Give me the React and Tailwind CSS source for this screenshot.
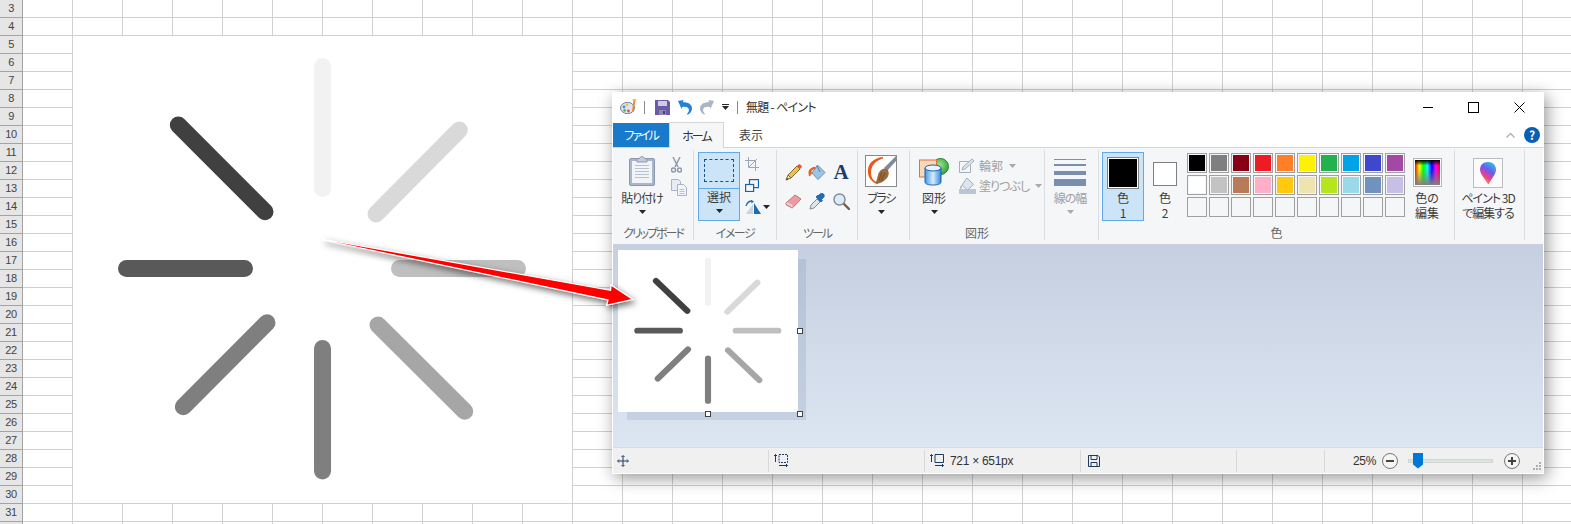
const rowNumbers = Array.from({ length: 30 }, (_, i) => i + 3);
const columns = Array.from({ length: 31 }, (_, i) => i);

const paletteTop = ["#000000", "#7f7f7f", "#880015", "#ed1c24", "#ff7f27", "#fff200", "#22b14c", "#00a2e8", "#3f48cc", "#a349a4"];
const paletteMiddle = ["#ffffff", "#c3c3c3", "#b97a57", "#ffaec9", "#ffc90e", "#efe4b0", "#b5e61d", "#99d9ea", "#7092be", "#c8bfe7"];

const spokes = [
  { x1: 322.5, y1: 66.5, x2: 322.5, y2: 188.5, color: "#f2f2f2" },
  { x1: 459.3, y1: 130, x2: 376, y2: 214, color: "#d9d9d9" },
  { x1: 399.5, y1: 268.5, x2: 517.5, y2: 268.5, color: "#bfbfbf" },
  { x1: 378, y1: 325, x2: 464.7, y2: 411.3, color: "#a6a6a6" },
  { x1: 322.5, y1: 348.5, x2: 322.5, y2: 471, color: "#7f7f7f" },
  { x1: 267, y1: 322.7, x2: 183.3, y2: 406.7, color: "#7f7f7f" },
  { x1: 126.5, y1: 268.5, x2: 244.5, y2: 268.5, color: "#595959" },
  { x1: 178.3, y1: 125, x2: 265, y2: 211.7, color: "#404040" },
];

function Spinner() {
  return (
    <svg viewBox="73 36 499 467" preserveAspectRatio="none" className="block w-full h-full">
      {spokes.map((s) => (
        <line key={s.x1 + "-" + s.y1} x1={s.x1} y1={s.y1} x2={s.x2} y2={s.y2} stroke={s.color} strokeWidth="17" strokeLinecap="round" />
      ))}
    </svg>
  );
}

function Sheet() {
  return (
    <div className="flex flex-col">
      {rowNumbers.map((n) => (
        <div key={n} className="flex h-[18px] shrink-0">
          <div className="flex items-center justify-center w-[23px] shrink-0 bg-[#e6e6e6] border-r border-b border-r-[#a3a3a3] border-b-[#a3a3a3] text-[11px] tracking-[-0.4px] text-[#444444] [font-family:'Liberation_Sans',sans-serif]">
            {n < 32 ? n : ""}
          </div>
          {columns.map((c) => (
            <div key={c} className="w-[50px] shrink-0 border-r border-b border-[#d0d0d0]" />
          ))}
        </div>
      ))}
    </div>
  );
}

function Caret({ muted, className = "" }) {
  return (
    <svg width="7" height="4" viewBox="0 0 7 4" className={className}>
      <path d="M0 0h7L3.5 4z" fill={muted ? "#a9a9a9" : "#262626"} />
    </svg>
  );
}

function BigButton({ width, label, lines, icon, caret = true, muted, selected, textClass = "" }) {
  const color = muted ? "text-[#a0a0a0]" : "text-[#3c3c3c]";
  return (
    <div
      className={
        "flex flex-col items-center shrink-0 h-[69px] " +
        (selected ? "bg-[#cce4f7] border border-[#64a8ec]" : "")
      }
      style={{ width }}
    >
      <div className={"flex items-center justify-center w-full shrink-0 " + (selected ? "h-[37px]" : "h-[38px]")}>{icon}</div>
      {lines ? (
        <div className={"text-center leading-[15px] whitespace-nowrap " + color + " " + textClass}>
          {lines.map((l) => (
            <div key={l}>{l}</div>
          ))}
        </div>
      ) : (
        <div className={"leading-[15px] whitespace-nowrap " + color + " " + textClass}>{label}</div>
      )}
      {caret && <Caret muted={muted} className="mt-[5px]" />}
    </div>
  );
}

function Group({ width, label, labelClass = "", children }) {
  return (
    <div className="flex flex-col shrink-0 h-[90px] border-r border-[#dcdde0]" style={{ width }}>
      <div className="flex flex-1 pt-[2px]">{children}</div>
      <div className={"text-center leading-[15px] h-[15px] text-[#666666] " + labelClass}>{label}</div>
    </div>
  );
}

function PaintIcon() {
  return (
    <svg width="18" height="16" viewBox="0 0 18 16">
      <ellipse cx="7.5" cy="9" rx="7" ry="5.6" fill="#dfe6ee" stroke="#6d8199" />
      <circle cx="4" cy="8" r="1.4" fill="#3f8fd6" />
      <circle cx="7" cy="6" r="1.4" fill="#e9c33b" />
      <circle cx="4.6" cy="11.4" r="1.4" fill="#5db14e" />
      <circle cx="8.4" cy="12" r="1.4" fill="#d9534f" />
      <path d="M13.4 1.5l2 .5-1.8 11-1.6-.4z" fill="#f0872e" />
      <path d="M12.6 0h3.6v2h-3.6z" fill="#f3b36a" />
    </svg>
  );
}

function SaveIcon({ color = "#6b5ba6" }) {
  return (
    <svg width="15" height="15" viewBox="0 0 15 15">
      <path d="M0 0h13l2 2v13H0z" fill={color} />
      <path d="M3 1h9v5H3z" fill="#cfc9e6" />
      <path d="M4 10h7v5H4z" fill="#8f86b8" />
      <path d="M8 11h2v3H8z" fill="#4a3e7e" />
    </svg>
  );
}

function UndoIcon({ color, flip }) {
  return (
    <svg width="15" height="15" viewBox="0 0 15 15" className={flip ? "-scale-x-100" : ""}>
      <path d="M0 1l5.5-1-.6 2.2C9.5 2 14 4 14 8.5c0 2.500-1.600 4.800-4 6-.6.300-1.400-.2-.8-.8 1.400-1.400 2-2.800 1.600-4.400-.5-2-2.800-2.700-6.600-2.400L3.600 9z" fill={color} />
    </svg>
  );
}

function ClipboardIcon() {
  return (
    <svg width="26" height="30" viewBox="0 0 26 30">
      <rect x="0.500" y="2.500" width="25" height="27" rx="1.500" fill="#a9b6cb" stroke="#8b98ae" />
      <rect x="3" y="5" width="20" height="22" fill="#f2f4f7" />
      <path d="M6 9.500h14M6 12.500h14M6 15.500h14M6 18.500h14M6 21.500h14" stroke="#b8c1cf" />
      <path d="M8 4c0-1 1-1.500 2.500-1.500C11 1 12 .5 13 .5s2 .5 2.500 2c1.500 0 2.500.5 2.500 1.500v2H8z" fill="#c4ccd9" stroke="#8b98ae" />
    </svg>
  );
}

function ScissorsIcon() {
  return (
    <svg width="11" height="16" viewBox="0 0 11 16" fill="none" stroke="#8b9ab2" strokeWidth="1.500">
      <path d="M2 0l5 10M9 0L4 10" />
      <circle cx="2.500" cy="13" r="2" />
      <circle cx="8.500" cy="13" r="2" />
    </svg>
  );
}

function CopyIcon() {
  return (
    <svg width="16" height="17" viewBox="0 0 16 17">
      <path d="M.5.500h7l2 2v9h-9z" fill="#e8ecf2" stroke="#a7b3c6" />
      <path d="M6.500 5.500h6l3 3v8h-9z" fill="#f3f5f8" stroke="#a7b3c6" />
      <path d="M8.500 10.500h5M8.500 12.500h5M8.500 14.500h5" stroke="#b9c3d2" />
    </svg>
  );
}

function CropIcon() {
  return (
    <svg width="14" height="14" viewBox="0 0 14 14" fill="none" stroke="#9aa6b8">
      <path d="M3.500 0v10.500H14M0 3.500h10.500V14M4 10l8-8" />
    </svg>
  );
}

function ResizeIcon() {
  return (
    <svg width="14" height="13" viewBox="0 0 14 13" fill="none" stroke="#1764ad" strokeWidth="1.200">
      <rect x="4.500" y="0.600" width="9" height="8" fill="#f5f6f7" />
      <rect x="0.600" y="5.500" width="8" height="7" fill="#f5f6f7" />
    </svg>
  );
}

function RotateIcon() {
  return (
    <svg width="16" height="14" viewBox="0 0 16 14">
      <path d="M1 14l7-10v10z" fill="#cfd3d8" />
      <path d="M9 14V3l7 11z" fill="#1c6cb5" />
      <path d="M1 6c1-3 3-5 6-5" fill="none" stroke="#1c6cb5" strokeWidth="1.300" />
      <path d="M6 0l3 1.200L6.500 3.500z" fill="#1c6cb5" />
    </svg>
  );
}

function PencilIcon() {
  return (
    <svg width="17" height="17" viewBox="0 0 17 17">
      <path d="M3 11L12 2l3 3-9 9z" fill="#f0c14a" stroke="#7a6a3a" />
      <path d="M12 2l1.500-1.500c.5-.5 1.200-.5 1.700 0l1.300 1.300c.5.500.5 1.200 0 1.700L15 5z" fill="#e2574c" />
      <path d="M3 11l3 3-5 2z" fill="#f3dfb5" stroke="#7a6a3a" />
      <path d="M1 16l1.500-2 1 1z" fill="#333333" />
    </svg>
  );
}

function BucketIcon() {
  return (
    <svg width="18" height="17" viewBox="0 0 18 17">
      <path d="M9.500 1L17 8.500 10 15.500 4 9z" fill="#9ac4e8" stroke="#6f8fae" />
      <path d="M9 2l3 6" stroke="#5e7d9c" />
      <path d="M5 9C3.500 9 2.500 8 4 6.500 5 5.500 6.500 4.800 8 4.500L6.800 2.800C3 3.500 .5 5.800.5 8.500c0 1 .3 1.800.3 3 0 1 1.700 1 1.700 0 0-.8.300-1.300 1-1.500z" fill="#ea5f1a" />
    </svg>
  );
}

function EraserIcon() {
  return (
    <svg width="17" height="15" viewBox="0 0 17 15">
      <path d="M1 9l9-8 6 4-8 8.500c-.5.500-1 .5-1.500.2L1.500 11C.8 10.600.6 9.600 1 9z" fill="#ef9aa0" stroke="#c1767c" />
      <path d="M1.500 10l6 3.500 0-2.500L2 8z" fill="#d9d9d9" />
    </svg>
  );
}

function DropperIcon() {
  return (
    <svg width="17" height="17" viewBox="0 0 17 17">
      <path d="M2 12l6-6 3 3-6 6-4 1z" fill="#dfe5ec" stroke="#7f8b98" />
      <path d="M9 3l2-2c1-1 2.500-1 3.500 0s1 2.500 0 3.500l-2 2 1 1-1.500 1.500-5-5L9 2z" fill="#1c6fc0" stroke="#124f8c" strokeWidth="0.700" />
    </svg>
  );
}

function MagnifierIcon() {
  return (
    <svg width="17" height="17" viewBox="0 0 17 17">
      <path d="M10 10l6 6" stroke="#7a5a3a" strokeWidth="2.400" strokeLinecap="round" />
      <circle cx="6.500" cy="6.500" r="5.500" fill="#dcebf7" stroke="#7f8b98" strokeWidth="1.400" />
    </svg>
  );
}

function BrushIcon() {
  return (
    <svg width="32" height="32" viewBox="0 0 32 32">
      <rect x="0.500" y="0.500" width="31" height="31" fill="#ffffff" stroke="#8a8a8a" />
      <path d="M31 1L19 13l3 3L31 6z" fill="#7f8a99" />
      <path d="M18 2C8 3 2 9 3 18c.5 5 4 9 9 11 2 .5 1-1 0-1.500-4-2-6-5-6-10C6 11 10 6 18 3.500z" fill="#e9591c" />
      <path d="M22 14c3 3 2 8-2 11-3 3-7 4-10 3 2-2 2-5 3-8 1-4 5-8 9-6z" fill="#9a6a3c" />
      <path d="M17 17l-3 8M20 18l-4 8" stroke="#6f4a27" />
    </svg>
  );
}

function ShapesIcon() {
  return (
    <svg width="30" height="29" viewBox="0 0 30 29">
      <defs>
        <radialGradient id="greenBall" cx="0.450" cy="0.400" r="0.700">
          <stop offset="0" stopColor="#9fe08f" />
          <stop offset="1" stopColor="#1f9a2f" />
        </radialGradient>
        <linearGradient id="cylinder" x1="0" x2="1" y1="0" y2="0">
          <stop offset="0" stopColor="#3f97ea" />
          <stop offset="0.500" stopColor="#d8edff" />
          <stop offset="1" stopColor="#2f86dc" />
        </linearGradient>
      </defs>
      <circle cx="21.500" cy="9.500" r="8" fill="url(#greenBall)" stroke="#1f8a2a" />
      <rect x="0.500" y="3" width="17" height="17" fill="#fbd7b8" stroke="#e0733a" />
      <path d="M6 11v14c0 2 3.500 3 8 3s8-1 8-3V11z" fill="url(#cylinder)" stroke="#1b63ad" />
      <ellipse cx="14" cy="11" rx="8" ry="3" fill="#eaf5ff" stroke="#1b63ad" />
    </svg>
  );
}

function OutlineIcon() {
  return (
    <svg width="17" height="15" viewBox="0 0 17 15" fill="none" stroke="#a4aebd">
      <path d="M12.500 3.500H.5v11h11V7" />
      <path d="M3 12l1-3 9-8 2 2-9 8z" fill="#dbe3ec" />
    </svg>
  );
}

function FillIcon() {
  return (
    <svg width="17" height="16" viewBox="0 0 17 16">
      <path d="M0 11h17v5H0z" fill="#bac6d6" />
      <path d="M8 0l6.500 6.500L8.500 12 3 7z" fill="#dde5ee" stroke="#a4aebd" />
      <path d="M3 7C1 8 .5 10 1.500 11c1 0 1.500-1.500 1.500-4z" fill="#a4aebd" />
    </svg>
  );
}

function LineWidthIcon() {
  return (
    <div className="flex flex-col w-[32px] h-[32px] pt-[4px]">
      <div className="h-[1px] bg-[#7a8fb0]" />
      <div className="h-[2px] mt-[4px] bg-[#7a8fb0]" />
      <div className="h-[4px] mt-[5px] bg-[#7a8fb0]" />
      <div className="h-[7px] mt-[4px] bg-[#7a8fb0]" />
    </div>
  );
}

function Paint3dIcon() {
  return (
    <svg width="30" height="30" viewBox="0 0 30 30">
      <defs>
        <linearGradient id="drop" x1="0.800" x2="0.300" y1="0" y2="1">
          <stop offset="0" stopColor="#27c9e8" />
          <stop offset="0.400" stopColor="#6a5cf0" />
          <stop offset="0.700" stopColor="#ee3f8f" />
          <stop offset="1" stopColor="#f5a623" />
        </linearGradient>
      </defs>
      <rect x="0.500" y="0.500" width="29" height="29" fill="#fbfbfb" stroke="#bdbdbd" />
      <path d="M15 4c5 0 8 3.500 8 7.500 0 5-4.500 9-7 14-.4.800-1.100.8-1.400 0C12 20.500 7 16.500 7 11.500 7 7.500 10 4 15 4z" fill="url(#drop)" />
    </svg>
  );
}

function Swatch({ color }) {
  return (
    <div className="w-[20px] h-[20px] border border-[#a0a0a0] p-px">
      <div className="w-full h-full" style={{ backgroundColor: color }} />
    </div>
  );
}

function Ribbon() {
  return (
    <div className="flex h-[96px] pt-[2px] bg-[#f5f6f7] shrink-0">
      <Group width={81} label="クリップボード" labelClass="tracking-[-2px]">
        <BigButton width={58} label="貼り付け" textClass="tracking-[-1px]" icon={<ClipboardIcon />} />
        <div className="flex flex-col gap-[6px] pt-[5px]">
          <ScissorsIcon />
          <CopyIcon />
        </div>
      </Group>
      <Group width={83} label="イメージ" labelClass="tracking-[-1.500px]">
        <div className="ml-[4px]">
          <div className="flex flex-col items-center w-[42px] h-[69px] bg-[#cce4f7] border border-[#64a8ec]">
            <div className="flex items-center justify-center w-full h-[36px] border-b border-[#64a8ec]">
              <div className="w-[30px] h-[23px] border border-dashed border-[#174f8f]" />
            </div>
            <div className="leading-[15px] text-[#3c3c3c]">選択</div>
            <Caret className="mt-[5px]" />
          </div>
        </div>
        <div className="flex flex-col items-start gap-[8px] pl-[5px] pt-[5px]">
          <CropIcon />
          <ResizeIcon />
          <div className="flex items-center gap-[2px]">
            <RotateIcon />
            <Caret />
          </div>
        </div>
      </Group>
      <Group width={81} label="ツール" labelClass="tracking-[-2px]">
        <div className="grid grid-cols-[24px_24px_24px] grid-rows-[29px_29px] ml-[4px] mt-[6px] place-items-center">
          <PencilIcon />
          <BucketIcon />
          <span className="text-[21px] leading-none font-bold text-[#1f3c68] [font-family:'Liberation_Serif',serif]">A</span>
          <EraserIcon />
          <DropperIcon />
          <MagnifierIcon />
        </div>
      </Group>
      <Group width={52} label="">
        <BigButton width={46} label="ブラシ" textClass="tracking-[-1.500px]" icon={<BrushIcon />} />
      </Group>
      <Group width={135} label="図形">
        <BigButton width={48} label="図形" icon={<ShapesIcon />} />
        <div className="flex flex-col gap-[5px] pt-[6px] pl-[1px] text-[#a0a0a0]">
          <div className="flex items-center gap-[3px] h-[15px] leading-none">
            <OutlineIcon />
            <span>輪郭</span>
            <Caret muted className="ml-[3px]" />
          </div>
          <div className="flex items-center gap-[3px] h-[16px] leading-none">
            <FillIcon />
            <span className="tracking-[-1px]">塗りつぶし</span>
            <Caret muted className="ml-[3px]" />
          </div>
        </div>
      </Group>
      <Group width={54} label="">
        <BigButton width={50} label="線の幅" muted textClass="tracking-[-1px]" icon={<LineWidthIcon />} />
      </Group>
      <Group width={356} label="色">
        <div className="ml-[3px]">
          <BigButton
            width={42}
            selected
            caret={false}
            lines={["色", "1"]}
            icon={
              <div className="w-[32px] h-[32px] mt-[3px] border border-[#808080] p-px bg-white">
                <div className="w-full h-full bg-black" />
              </div>
            }
          />
        </div>
        <BigButton
          width={42}
          caret={false}
          lines={["色", "2"]}
          icon={
            <div className="w-[24px] h-[24px] mt-[5px] border border-[#808080] bg-white" />
          }
        />
        <div className="grid grid-cols-[repeat(10,20px)] gap-[2px] ml-[1px] mt-[1px] h-fit">
          {paletteTop.map((c) => (
            <Swatch key={c} color={c} />
          ))}
          {paletteMiddle.map((c) => (
            <Swatch key={c} color={c} />
          ))}
          {paletteTop.map((c) => (
            <Swatch key={c} color="#f5f6f7" />
          ))}
        </div>
        <div className="ml-[1px]">
          <BigButton
            width={42}
            caret={false}
            lines={["色の", "編集"]}
            icon={
              <div className="w-[29px] h-[29px] mt-[2px] border border-[#b5b5b5] p-px bg-white">
                <div className="w-full h-full bg-[linear-gradient(to_bottom,#000_0%,transparent_22%,transparent_35%,#808080_100%),linear-gradient(to_right,#f00,#ff0,#0f0,#0ff,#00f,#f0f,#f00)]" />
              </div>
            }
          />
        </div>
      </Group>
      <Group width={70} label="">
        <BigButton
          width={66}
          caret={false}
          textClass="tracking-[-1px]"
          lines={["ペイント 3D", "で編集する"]}
          icon={<div className="mt-[4px]"><Paint3dIcon /></div>}
        />
      </Group>
    </div>
  );
}

function StatusCell({ width, children }) {
  return (
    <div className="flex items-center shrink-0 h-[22px] pl-[4px] gap-[6px] border-r border-[#d9d9d9]" style={{ width }}>
      {children}
    </div>
  );
}

function ZoomButton({ minus }) {
  return (
    <svg width="16" height="16" viewBox="0 0 16 16" fill="none">
      <circle cx="8" cy="8" r="7.500" fill="#f5f5f5" stroke="#777777" />
      <path d={minus ? "M4 8h8" : "M4 8h8M8 4v8"} stroke="#444444" strokeWidth="2" />
    </svg>
  );
}

function StatusBar() {
  return (
    <div className="flex items-center h-[26px] shrink-0 bg-[#f0f0f0] border-t border-[#dadbdc] text-[#333333]">
      <StatusCell width={156}>
        <svg width="12" height="12" viewBox="0 0 12 12" fill="none" stroke="#1e3a5f">
          <path d="M6 1v10M1 6h10" />
          <path d="M4.500 2L6 .5 7.500 2M4.500 10L6 11.500 7.500 10M2 4.500L.5 6 2 7.500M10 4.500L11.500 6 10 7.500" />
        </svg>
      </StatusCell>
      <StatusCell width={156}>
        <svg width="14" height="13" viewBox="0 0 14 13" className="ml-[1px]" fill="none" stroke="#1e3a5f">
          <path d="M5 .5h8.500v8H5z" strokeDasharray="2 1" />
          <path d="M1.500 8V.5M0 2L1.500.5 3 2M5 11.500h8.500M12 10l1.500 1.500L12 13" />
        </svg>
      </StatusCell>
      <StatusCell width={156}>
        <svg width="14" height="13" viewBox="0 0 14 13" className="ml-[1px]" fill="none" stroke="#1e3a5f">
          <path d="M5 .5h8.500v8H5z" />
          <path d="M1.500 8V.5M0 2L1.500.5 3 2M5 11.500h8.500M12 10l1.500 1.500L12 13" />
        </svg>
        <span className="whitespace-nowrap tracking-[-0.3px] [font-family:'Liberation_Sans',sans-serif]">721 × 651px</span>
      </StatusCell>
      <StatusCell width={156}>
        <svg width="12" height="12" viewBox="0 0 12 12" className="ml-[3px]" fill="none" stroke="#1e3a5f">
          <path d="M.5.500h9.500l1.500 1.500v9.500H.5z" />
          <path d="M3 .5v4h6v-4M3 11.500v-4h6v4" />
        </svg>
      </StatusCell>
      <StatusCell width={88} />
      <div className="flex items-center pl-[28px] h-[22px]">
        <span className="w-[29px] tracking-[-0.3px] [font-family:'Liberation_Sans',sans-serif]">25%</span>
        <ZoomButton minus />
        <div className="relative w-[85px] h-[4px] ml-[10px] bg-[#dfe3df] border border-[#d2d6d2]">
          <div className="absolute left-[4px] top-[-7px] w-[10px] h-[16px] bg-[#0078d7] [clip-path:polygon(0_0,100%_0,100%_75%,50%_100%,0_75%)]" />
        </div>
        <div className="ml-[11px]">
          <ZoomButton />
        </div>
        <svg width="8" height="8" viewBox="0 0 8 8" className="ml-[13px] mt-[10px]" fill="#b0b0b0">
          <path d="M6 0h2v2H6zM3 3h2v2H3zM6 3h2v2H6zM0 6h2v2H0zM3 6h2v2H3zM6 6h2v2H6z" />
        </svg>
      </div>
    </div>
  );
}

function PaintWindow() {
  return (
    <div className="absolute left-[612px] top-[92px] flex flex-col w-[932px] h-[382px] bg-white px-px shadow-[3px_4px_16px_rgba(0,0,0,0.42)] text-[12px] [font-family:'Noto_Sans_CJK_JP','Noto_Sans',sans-serif] [font-feature-settings:'palt']">
      <div className="flex items-center h-[30px] shrink-0 pl-[7px]">
        <PaintIcon />
        <div className="w-px h-[13px] ml-[6px] bg-[#8a8a8a]" />
        <div className="ml-[10px]"><SaveIcon /></div>
        <div className="ml-[8px]"><UndoIcon color="#1f83d6" /></div>
        <div className="ml-[6px]"><UndoIcon color="#a9b6c6" flip /></div>
        <div className="flex flex-col items-center ml-[8px] gap-[1px]">
          <div className="w-[7px] h-px bg-[#262626]" />
          <Caret />
        </div>
        <div className="w-px h-[13px] ml-[8px] bg-[#8a8a8a]" />
        <span className="ml-[8px] text-[#333333] tracking-[-0.7px]">無題 - ペイント</span>
        <div className="flex items-center ml-auto">
          <div className="w-[10px] h-px bg-black mr-[35px]" />
          <div className="w-[11px] h-[11px] border border-black mr-[35px]" />
          <svg width="11" height="11" viewBox="0 0 11 11" className="mr-[18px]" stroke="#000000">
            <path d="M.5.500l10 10M10.500.500l-10 10" />
          </svg>
        </div>
      </div>
      <div className="flex h-[26px] shrink-0 border-b border-[#d5d5d5] bg-white">
        <div className="flex items-center justify-center w-[56px] h-[24px] mt-px bg-[#1979ca] text-white tracking-[-2px]">ファイル</div>
        <div className="flex items-center justify-center w-[55px] h-[26px] bg-[#f5f6f7] border-x border-t border-[#d5d5d5] text-[#333333] tracking-[-2px]">ホーム</div>
        <div className="flex items-center justify-center w-[54px] text-[#444444]">表示</div>
        <div className="flex items-center ml-auto pr-[3px]">
          <svg width="9" height="6" viewBox="0 0 9 6" fill="none" stroke="#b0b0b0" strokeWidth="1.300" className="mr-[9px]">
            <path d="M.5 5.500l4-4 4 4" />
          </svg>
          <div className="flex items-center justify-center w-[16px] h-[16px] rounded-full bg-[#0a5fb4] text-white text-[12px] font-bold leading-none">?</div>
        </div>
      </div>
      <Ribbon />
      <div className="flex-1 min-h-0 bg-linear-to-b from-[#c5cfe0] to-[#dce6f2] pl-[5px] pt-[6px]">
        <div className="relative w-[180px] h-[162px]">
          <div className="absolute left-[9px] top-[9px] w-[179px] h-[161px] bg-[#4f6a96]/15" />
          <div className="relative w-full h-full bg-white">
            <Spinner />
          </div>
          <div className="absolute left-[179px] top-[78px] w-[6px] h-[6px] bg-white border border-[#444444]" />
          <div className="absolute left-[87px] top-[161px] w-[6px] h-[6px] bg-white border border-[#444444]" />
          <div className="absolute left-[179px] top-[161px] w-[6px] h-[6px] bg-white border border-[#444444]" />
        </div>
      </div>
      <StatusBar />
      <div className="h-px shrink-0" />
    </div>
  );
}

export default function App() {
  return (
    <div className="relative w-[1571px] h-[524px] overflow-hidden bg-white">
      <Sheet />
      <div className="absolute left-[73px] top-[36px] w-[499px] h-[467px] bg-white">
        <Spinner />
      </div>
      <PaintWindow />
      <svg
        width="330"
        height="80"
        viewBox="320 235 330 80"
        className="absolute left-[320px] top-[235px] drop-shadow-[2px_3px_3px_rgba(0,0,0,0.55)]"
      >
        <path
          d="M324 239.300L610.500 290.300L611 285L633 299.500L606.500 305.500L608 300L324 240.300Z"
          fill="#ff0000"
          stroke="#ffffff"
          strokeWidth="1.300"
          strokeLinejoin="miter"
        />
      </svg>
    </div>
  );
}
